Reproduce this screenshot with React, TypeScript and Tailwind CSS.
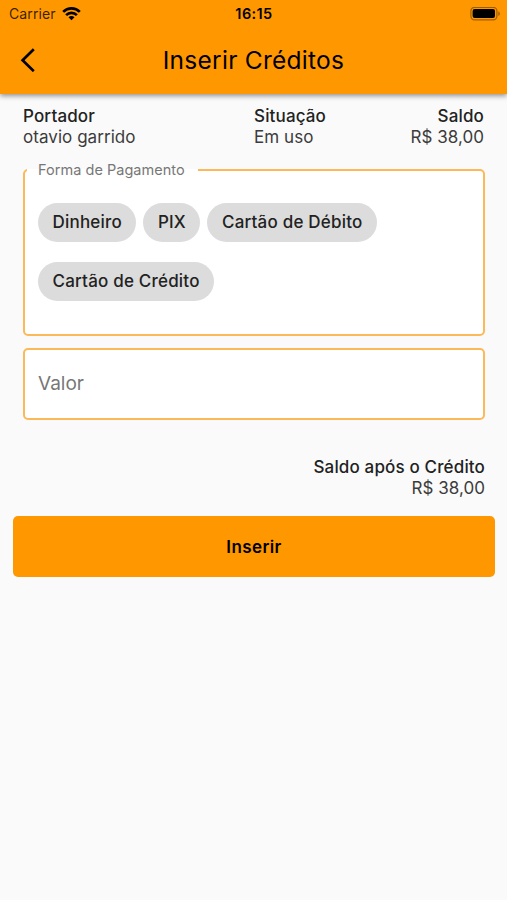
import type { ReactNode } from 'react';

const PAYMENT_METHODS = ['Dinheiro', 'PIX', 'Cartão de Débito', 'Cartão de Crédito'];

function StatusBar() {
    return (
        <div className="grid h-[27px] grid-cols-3 items-center pr-[6px] pl-[9px] text-black">
            <div className="flex items-center gap-[6px]">
                <span className="text-[14px] leading-[20px] tracking-[0.1px] text-black/80">Carrier</span>
                <svg width="19" height="14" viewBox="0 0 19 14" fill="none" stroke="currentColor" strokeWidth="2.7" aria-hidden="true">
                    <path d="M1.2 4.9C5.8 0.3 13.2 0.3 17.8 4.9" />
                    <path d="M4.1 8.1C7.1 5.2 11.9 5.2 14.9 8.1" />
                    <path d="M6.5 10.2C8.2 8.7 10.8 8.7 12.5 10.2L9.5 13.3Z" fill="currentColor" stroke="none" />
                </svg>
            </div>
            <span className="-ml-[2px] text-center text-[14.5px] leading-[20px] font-semibold tracking-[0.4px]">16:15</span>
            <svg className="justify-self-end" width="31" height="14" viewBox="0 0 31 14" aria-hidden="true">
                <rect x="0.9" y="0.3" width="26" height="12.6" rx="3.6" fill="none" stroke="black" strokeOpacity="0.38" strokeWidth="1.2" />
                <rect x="2.6" y="2.1" width="22.4" height="9" rx="2" fill="black" />
                <path d="M28.3 4.5C30.4 5.2 30.4 8.2 28.3 8.9Z" fill="black" fillOpacity="0.4" />
            </svg>
        </div>
    );
}

function AppBar() {
    return (
        <header className="relative h-[94px] bg-[#ff9800] shadow-[0_2px_5px_rgba(0,0,0,0.42)]">
            <StatusBar />
            <div className="grid h-[65px] grid-cols-[56px_1fr_56px] items-center">
                <button type="button" aria-label="Voltar" className="pl-[20px]">
                    <svg width="16" height="24" viewBox="0 0 16 24" fill="none" stroke="black" strokeWidth="2.7" aria-hidden="true">
                        <path d="M13.8 1.2L2.6 12.2L13.8 23.2" />
                    </svg>
                </button>
                <h1 className="text-center text-[24.5px] leading-[32px] tracking-[0.27px] text-black">Inserir Créditos</h1>
            </div>
        </header>
    );
}

function Info({ label, className, children }: { label: string; className?: string; children: ReactNode }) {
    return (
        <div className={className}>
            <div className="font-medium tracking-[0.15px]">{label}</div>
            <div className="tracking-[0.05px] text-[#3c3c3c]">{children}</div>
        </div>
    );
}

export default function App() {
    return (
        <div className="min-h-[900px] w-[507px] bg-[#fafafa] font-[Inter,sans-serif] text-[17px] leading-[21px] text-[#222]">
            <AppBar />
            <main>
                <div className="flex px-[23px] pt-[12px]">
                    <Info label="Portador" className="w-[231px]">otavio garrido</Info>
                    <Info label="Situação">Em uso</Info>
                    <Info label="Saldo" className="ml-auto text-right">R$ 38,00</Info>
                </div>

                <fieldset className="mx-[23px] mt-[12px] h-[176px] w-[462px] rounded-[5px] border-2 border-[#fbb95a] bg-white pl-[13px]">
                    <legend className="-ml-[11px] h-[20px] pr-[13px] pl-[11px] text-[14.5px] leading-[20px] tracking-[0.03px] text-[#777]">
                        Forma de Pagamento
                    </legend>
                    <div className="mt-[23px] flex flex-wrap gap-x-[7px] gap-y-[20px]">
                        {PAYMENT_METHODS.map((method) => (
                            <button
                                key={method}
                                type="button"
                                className="h-[39px] rounded-full bg-[#dcdcdc] px-[14.5px] font-medium tracking-[0.2px]"
                            >
                                {method}
                            </button>
                        ))}
                    </div>
                </fieldset>

                <input
                    type="text"
                    placeholder="Valor"
                    className="mx-[23px] mt-[12px] block h-[72px] w-[462px] rounded-[5px] border-2 border-[#fbb95a] bg-white px-[13px] pb-px text-[19px] placeholder:text-[#777]"
                />

                <Info label="Saldo após o Crédito" className="mt-[37px] px-[22px] text-right">R$ 38,00</Info>

                <button
                    type="button"
                    className="mx-[13px] mt-[17px] block h-[61px] w-[482px] rounded-[5px] bg-[#ff9800] pt-[2px] font-semibold tracking-[0.4px] text-black"
                >
                    Inserir
                </button>
            </main>
        </div>
    );
}
